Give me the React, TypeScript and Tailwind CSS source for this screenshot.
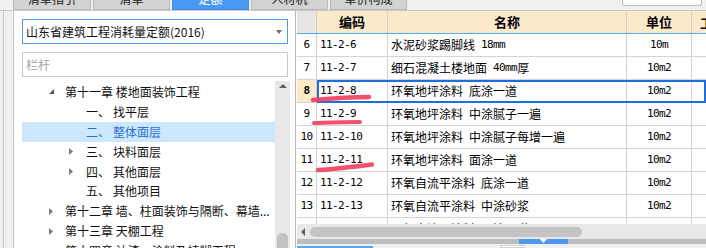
import React from "react";

const CJK = "font-['Noto_Sans_CJK_SC',sans-serif]";
const MONO = "font-['DejaVu_Sans_Mono','Noto_Sans_CJK_SC',monospace] text-[11px] tracking-[-0.6px]";

type TreeRow = {
  level: 1 | 2;
  arrow?: "open" | "closed";
  num?: string;
  text: string;
  selected?: boolean;
};

const tree: TreeRow[] = [
  { level: 1, arrow: "open", text: "第十一章 楼地面装饰工程" },
  { level: 2, num: "一、", text: "找平层" },
  { level: 2, num: "二、", text: "整体面层", selected: true },
  { level: 2, arrow: "closed", num: "三、", text: "块料面层" },
  { level: 2, arrow: "closed", num: "四、", text: "其他面层" },
  { level: 2, num: "五、", text: "其他项目" },
  { level: 1, arrow: "closed", text: "第十二章 墙、柱面装饰与隔断、幕墙..." },
  { level: 1, arrow: "closed", text: "第十三章 天棚工程" },
  { level: 1, arrow: "closed", text: "第十四章 油漆、涂料及裱糊工程" },
];

const rows = [
  { no: "6", code: "11-2-6", name: "水泥砂浆踢脚线 18mm", unit: "10m" },
  { no: "7", code: "11-2-7", name: "细石混凝土楼地面 40mm厚", unit: "10m2" },
  { no: "8", code: "11-2-8", name: "环氧地坪涂料 底涂一道", unit: "10m2", current: true },
  { no: "9", code: "11-2-9", name: "环氧地坪涂料 中涂腻子一遍", unit: "10m2" },
  { no: "10", code: "11-2-10", name: "环氧地坪涂料 中涂腻子每增一遍", unit: "10m2" },
  { no: "11", code: "11-2-11", name: "环氧地坪涂料 面涂一道", unit: "10m2" },
  { no: "12", code: "11-2-12", name: "环氧自流平涂料 底涂一道", unit: "10m2" },
  { no: "13", code: "11-2-13", name: "环氧自流平涂料 中涂砂浆", unit: "10m2" },
  { no: "14", code: "11-2-14", name: "环氧自流平涂料 面涂一道", unit: "10m2" },
];

const tabs = [
  { label: "清单指引", w: "w-[78px]" },
  { label: "清单", w: "w-[77px]" },
  { label: "定额", w: "w-[77px]", active: true },
  { label: "人材机", w: "w-[77px]" },
  { label: "单价构成", w: "w-[77px]" },
];

// ASCII runs in the grid use a narrow mono face, like the bitmap 宋体 digits
function Mixed({ text }: { text: string }) {
  const parts = text.match(/[\x20-\x7e]+|[^\x20-\x7e]+/g) ?? [];
  return (
    <>
      {parts.map((p, i) =>
        /^[\x20-\x7e]+$/.test(p) ? (
          <span key={i} className={`${MONO} whitespace-pre`}>
            {p}
          </span>
        ) : (
          <span key={i}>{p}</span>
        ),
      )}
    </>
  );
}

function Arrow({ kind }: { kind?: "open" | "closed" }) {
  if (kind === "open")
    return (
      <svg width="5" height="5" viewBox="0 0 5 5">
        <path d="M5 0 L5 5 L0 5 Z" fill="#595959" />
      </svg>
    );
  if (kind === "closed")
    return (
      <svg width="4" height="7" viewBox="0 0 4 7">
        <path d="M0 0 L4 3.5 L0 7 Z" fill="#7a7a7a" />
      </svg>
    );
  return null;
}

function TabStrip() {
  return (
    <div className="flex h-[10px] shrink-0 items-start bg-[#f0f0f0]">
      <div className="w-[13px]" />
      <div className="flex gap-[2px]">
        {tabs.map((t) => (
          <div
            key={t.label}
            className={`relative h-[10px] overflow-hidden border-x border-b ${t.w} ${
              t.active ? "border-[#3d8ef0] bg-[#4a9af5] text-white" : "border-[#b9b9b9] bg-[#d3d3d3] text-[#222]"
            }`}
          >
            <span className="absolute inset-x-0 -top-[7px] text-center text-[12px] leading-[12px]">{t.label}</span>
          </div>
        ))}
      </div>
      <div className="flex-1" />
      <div className="mr-[4px] h-[6px] w-[80px] rounded-b-[3px] border-x border-b border-[#bdbdbd] bg-white" />
    </div>
  );
}

function LeftPanel() {
  return (
    <div className="flex w-[282px] shrink-0 flex-col border-l border-[#c6c6c6] bg-white">
      <div className="pl-[8px] pr-[7px] pt-[8px]">
        <div className="flex h-[25px] items-center justify-between border border-[#4f9be8] pl-[3px] pr-[5px]">
          <span className="text-[12px] text-[#111]">山东省建筑工程消耗量定额(2016)</span>
          <svg width="6" height="4" viewBox="0 0 6 4">
            <path d="M0 0 L6 0 L3 4 Z" fill="#6b6b6b" />
          </svg>
        </div>
        <div className="mt-[8px] flex h-[25px] items-center border border-[#c8c8c8] pl-[3px] text-[12px] text-[#a3a3a3]">
          栏杆
        </div>
      </div>
      <div className="mt-[4px] flex min-h-0 flex-1">
        <div className="min-w-0 flex-1 overflow-hidden pl-[8px] pt-[1px]">
          {tree.map((r) => (
            <div
              key={r.text}
              className={`flex h-[19.9px] items-center whitespace-nowrap text-[12px] ${
                r.selected ? "bg-[#cce8ff] text-[#2b6fd6]" : "text-[#111]"
              } ${r.level === 1 ? "pl-[27px]" : "pl-[47px]"}`}
            >
              <span className={`flex items-center ${r.level === 1 ? "w-[16px]" : "w-[17px]"}`}>
                <Arrow kind={r.arrow} />
              </span>
              {r.num && <span className="w-[27px]">{r.num}</span>}
              <span>{r.text}</span>
            </div>
          ))}
        </div>
        <div className="flex w-[15px] shrink-0 flex-col items-center justify-between bg-[#e8e8e8] pt-[3px]">
          <svg width="8" height="4" viewBox="0 0 8 4">
            <path d="M0 4 L4 0 L8 4 Z" fill="#606060" />
          </svg>
          <div className="h-[15px] w-[11px] rounded-t-[5px] bg-[#c3c3c3]" />
        </div>
        <div className="w-[5px] shrink-0" />
      </div>
    </div>
  );
}

const cols = "grid grid-cols-[20px_71px_239px_65px_1fr]";

function RightPanel() {
  return (
    <div className="flex min-w-0 flex-1 flex-col border-l border-[#b8b8b8] bg-white pl-[1px]">
      <div className={`${cols} h-[23px] shrink-0 border-b border-[#5aa6f2] text-[13px] font-bold`}>
        <div className="border-r border-[#d0d0d0] bg-[#e6e6e6]" />
        <div className="flex items-center justify-center border-r border-[#d0d0d0] bg-[#fde9cc]">编码</div>
        <div className="flex items-center justify-center border-r border-[#d0d0d0] bg-[#fde9cc]">名称</div>
        <div className="flex items-center justify-center border-r border-[#d0d0d0] bg-[#fde9cc]">单位</div>
        <div className="overflow-hidden whitespace-nowrap bg-[#fde9cc] pl-[8px] leading-[23px]">工程量</div>
      </div>
      <div className="h-[190px] shrink-0 overflow-hidden">
        {rows.map((r) => (
          <div key={r.no} className={`${cols} relative h-[23px] border-b border-[#d4d4d4] text-[12px] text-black`}>
            <div
              className={`flex items-center justify-center border-r border-[#d0d0d0] ${MONO} ${
                r.current ? "bg-[#fde8c8] font-bold" : ""
              }`}
            >
              {r.no}
            </div>
            <div className={`flex items-center border-r border-[#d4d4d4] pl-[3px] ${MONO}`}>{r.code}</div>
            <div className="flex items-center overflow-hidden whitespace-nowrap border-r border-[#d4d4d4] pl-[3px]">
              <Mixed text={r.name} />
            </div>
            <div className={`flex items-center justify-center border-r border-[#d4d4d4] ${MONO}`}>{r.unit}</div>
            <div />
            {r.current && <div className="absolute left-[20px] right-0 top-0 h-[23px] border-2 border-[#1e6ee0]" />}
          </div>
        ))}
      </div>
      <div className="flex h-[15px] shrink-0 items-center bg-[#e8e8e8]">
        <span className="ml-[4px] flex w-[9px] items-center">
          <svg width="4" height="8" viewBox="0 0 4 8">
            <path d="M4 0 L0 4 L4 8 Z" fill="#5e5e5e" />
          </svg>
        </span>
        <div className="h-[10px] w-[272px] rounded-full bg-[#c4c4c4]" />
      </div>
      <div className="flex h-[5px] shrink-0 bg-[#bdbdbd]">
        <div className="w-[222px]" />
        <div className="flex w-[49px] justify-center bg-[#4a9af5]">
          <svg width="7" height="4" viewBox="0 0 7 4">
            <path d="M0 0 L7 0 L3.5 4 Z" fill="#fff" />
          </svg>
        </div>
      </div>
      <div className="flex h-[4px] shrink-0 items-end bg-[#f0f0f0]">
        <div className="h-[2px] w-[76px] bg-[#5aa6f2]" />
        <div className="ml-[127px] h-[3px] w-[25px] border border-[#d0d0d0] bg-white" />
      </div>
    </div>
  );
}

export default function App() {
  return (
    <div className={`relative flex h-[248px] w-[706px] flex-col overflow-hidden bg-[#f0f0f0] text-black ${CJK}`}>
      <TabStrip />
      <div className="flex min-h-0 flex-1 border-t border-[#c8c8c8]">
        <div className="w-[13px] shrink-0 bg-[#f0f0f0] pl-[3px]">
          <div className="h-full border-l border-[#c5cad3]" />
        </div>
        <LeftPanel />
        <RightPanel />
      </div>
      {/* hand-drawn red marks under the codes */}
      <svg className="pointer-events-none absolute left-0 top-0" width="706" height="248">
        <g fill="none" stroke="#f23d5e" strokeLinecap="round" strokeOpacity="0.9">
          <path d="M313 100 C 330 98.5, 350 97, 369 97" strokeWidth="4.5" />
          <path d="M314 123 C 330 122.5, 345 122, 360 122" strokeWidth="4" />
          <path d="M318 170 C 335 169, 355 166.5, 372 164.5" strokeWidth="4.5" />
        </g>
      </svg>
    </div>
  );
}
